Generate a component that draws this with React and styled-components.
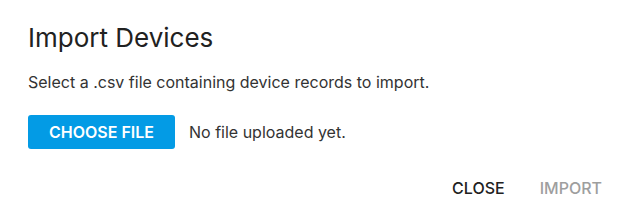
import React from 'react';
import styled, { createGlobalStyle } from 'styled-components';

const GlobalStyle = createGlobalStyle`
  body {
    margin: 0;
    background: #fff;
    font-family: 'Inter', 'Liberation Sans', sans-serif;
    color: #212121;
  }
`;

const SDialog = styled.div`
  width: 619px;
  height: 219px;
  box-sizing: border-box;
  padding: 22px 9px 0 28px;
  display: flex;
  flex-direction: column;
`;

const STitle = styled.h2`
  margin: 0;
  font-size: 26px;
  font-weight: 400;
  line-height: 32px;
  color: #212121;
`;

const SText = styled.p`
  margin: 18px 0 0 0;
  font-size: 16px;
  line-height: 20px;
  color: #333;
`;

const SRow = styled.div`
  display: flex;
  align-items: center;
  gap: 14px;
  margin-top: 23px;
`;

const SChooseButton = styled.button`
  height: 34px;
  width: 147px;
  border: none;
  border-radius: 3px;
  background: #039be5;
  color: #fff;
  font-family: inherit;
  font-size: 16px;
  font-weight: 600;
  cursor: pointer;
`;

const SStatus = styled.span`
  font-size: 16px;
  color: #333;
`;

const SActions = styled.div`
  display: flex;
  justify-content: flex-end;
  gap: 19px;
  margin-top: 23px;
`;

const SActionButton = styled.button`
  border: none;
  background: none;
  padding: 6px 8px;
  font-family: inherit;
  font-size: 16px;
  font-weight: 500;
  color: ${props => (props.disabled ? '#9e9e9e' : '#212121')};
`;

function App() {
  return (
    <>
      <GlobalStyle />
      <SDialog>
        <STitle>Import Devices</STitle>
        <SText>Select a .csv file containing device records to import.</SText>
        <SRow>
          <SChooseButton type="button">CHOOSE FILE</SChooseButton>
          <SStatus>No file uploaded yet.</SStatus>
        </SRow>
        <SActions>
          <SActionButton type="button">CLOSE</SActionButton>
          <SActionButton type="button" disabled>
            IMPORT
          </SActionButton>
        </SActions>
      </SDialog>
    </>
  );
}

export default App;
